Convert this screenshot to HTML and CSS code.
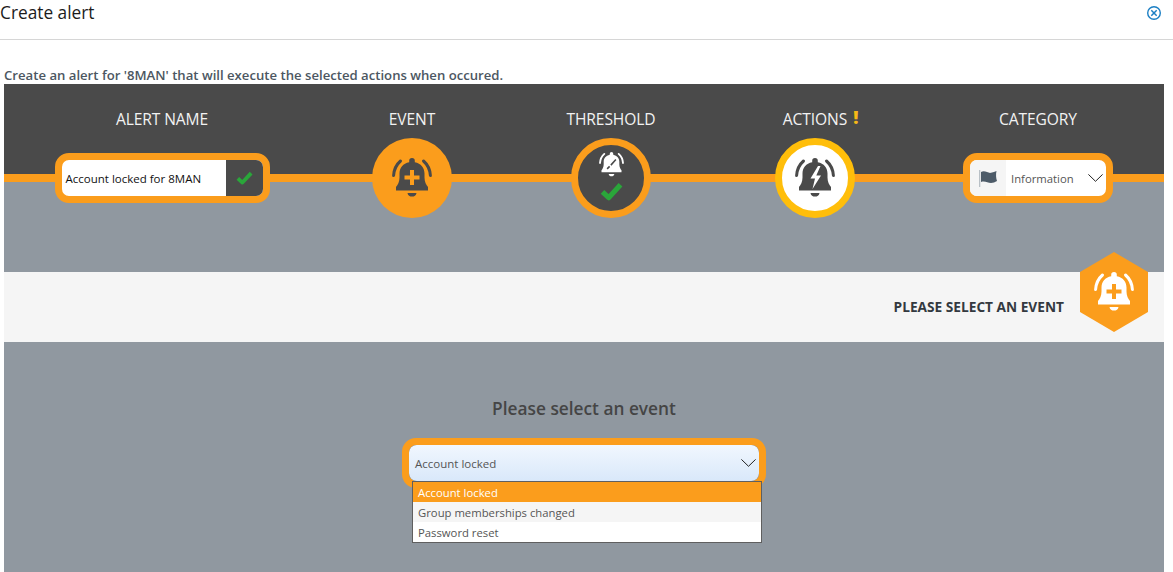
FILE: index.html
```html
<!DOCTYPE html>
<html lang="en">
<head>
    <meta charset="UTF-8">
    <meta name="viewport" content="width=device-width, initial-scale=1.0">
    <title>Create alert</title>
    <link rel="stylesheet" href="styles.css">
</head>
<body>
    <svg class="icon-defs" width="0" height="0" aria-hidden="true">
        <symbol id="bell" viewBox="0 0 40 40">
            <path fill="currentColor" d="M20 0a2.800 2.800 0 0 1 2.800 2.800v1.500C29 5.500 32.500 10 32.500 15.500v4c0 4.500 1.800 7.500 3.500 9.500v3.500H4V29c1.700-2 3.500-5 3.500-9.500v-4C7.500 10 11 5.500 17.200 4.300V2.800A2.800 2.800 0 0 1 20 0z"/>
            <path fill="currentColor" d="M15.500 35h9c-.4 2.600-2.200 3.600-4.500 3.600s-4.100-1-4.500-3.600z"/>
            <path fill="none" stroke="currentColor" stroke-width="3" stroke-linecap="round" d="M1.600 17.500C2 11.500 4.500 6.500 8.500 3M38.400 17.500C38 11.500 35.500 6.500 31.500 3"/>
        </symbol>
        <symbol id="check" viewBox="0 0 24 20">
            <path fill="none" stroke="currentColor" stroke-width="5.400" stroke-linejoin="round" d="M2.500 10.500l6.500 6L21.500 3"/>
        </symbol>
        <symbol id="chevron" viewBox="0 0 15 8">
            <path fill="none" stroke="currentColor" stroke-width="1" d="M.4 .4L7.500 7.300 14.600 .4"/>
        </symbol>
    </svg>

    <div class="dialog-header">
        <h1>Create alert</h1>
        <svg class="close-icon" viewBox="0 0 16 16" width="16" height="16">
            <circle cx="8" cy="8" r="6.300" fill="none" stroke="#1b7fc4" stroke-width="1.400"/>
            <path fill="none" stroke="#1b7fc4" stroke-width="1.500" d="M5.300 5.300l5.400 5.400M10.700 5.300l-5.400 5.400"/>
        </svg>
    </div>

    <p class="intro">Create an alert for '8MAN' that will execute the selected actions when occured.</p>

    <div class="wizard">
        <div class="steps">
            <div class="step">
                <div class="step-label">ALERT NAME</div>
                <div class="field-frame name-field">
                    <span class="name-text">Account locked for 8MAN</span>
                    <span class="name-check">
                        <svg class="check-icon" width="17" height="14"><use href="#check"/></svg>
                    </span>
                </div>
            </div>
            <div class="step">
                <div class="step-label">EVENT</div>
                <div class="step-circle circle-event">
                    <svg class="bell-icon" width="40" height="40" viewBox="0 0 40 40">
                        <use href="#bell"/>
                        <path class="bell-plus" d="M20 12v15M12.500 19.500h15"/>
                    </svg>
                </div>
            </div>
            <div class="step">
                <div class="step-label">THRESHOLD</div>
                <div class="step-circle circle-threshold">
                    <svg class="threshold-bell" width="25" height="25" viewBox="0 0 40 40">
                        <use href="#bell"/>
                        <path class="bell-slash" d="M13 27l4-4M19 21l8-9"/>
                    </svg>
                    <svg class="check-icon" width="23" height="19"><use href="#check"/></svg>
                </div>
            </div>
            <div class="step">
                <div class="step-label">ACTIONS<span class="warn-mark">!</span></div>
                <div class="step-circle circle-actions">
                    <svg class="bell-icon" width="40" height="40" viewBox="0 0 40 40">
                        <use href="#bell"/>
                        <path class="bell-bolt" d="M23 8l-7.500 12.500h4.500L17.500 31l8.500-13.500h-4.700L25.500 8z"/>
                    </svg>
                </div>
            </div>
            <div class="step">
                <div class="step-label">CATEGORY</div>
                <div class="field-frame category-field">
                    <span class="category-flag">
                        <svg width="20" height="17" viewBox="0 0 20 17">
                            <path fill="#b9c0c6" d="M1 0h1.300v17H1z"/>
                            <path fill="#4d5b68" d="M3 2c4-2 7 1.500 10 .8 2-.4 4-1 5.500-1.800-.8 3.500-.5 7 .5 10-2 1.200-4 2-6 2-3.500 0-6-2.500-10-1z"/>
                        </svg>
                    </span>
                    <span class="category-text">Information</span>
                    <svg class="chevron" width="15" height="8"><use href="#chevron"/></svg>
                </div>
            </div>
        </div>

        <div class="event-band">
            <span class="band-title">PLEASE SELECT AN EVENT</span>
            <div class="band-hex">
                <svg width="40" height="40" viewBox="0 0 40 40">
                    <use href="#bell"/>
                    <path class="bell-plus" d="M20 12v15M12.500 19.500h15"/>
                </svg>
            </div>
        </div>

        <div class="event-body">
            <h2>Please select an event</h2>
            <div class="select-wrap">
                <div class="field-frame select-frame">
                    <div class="select-box">
                        <span>Account locked</span>
                        <svg class="chevron" width="15" height="8"><use href="#chevron"/></svg>
                    </div>
                </div>
                <ul class="select-list">
                    <li class="selected">Account locked</li>
                    <li class="hover">Group memberships changed</li>
                    <li>Password reset</li>
                </ul>
            </div>
        </div>
    </div>
</body>
</html>
```

FILE: styles.css
```css
html, body {
    height: 100%;
}
body {
    margin: 0;
    overflow: hidden;
    background-color: #fff;
    font-family: 'Open Sans', 'Liberation Sans', sans-serif;
    color: #333;
}
.icon-defs {
    position: absolute;
}
.dialog-header {
    height: 39px;
    border-bottom: 1px solid #d6d6d6;
    display: flex;
    justify-content: space-between;
    padding-right: 11px;
}
.dialog-header h1 {
    margin: 0;
    font-size: 17.300px;
    line-height: 25px;
    font-weight: 400;
    color: #1c1c1c;
}
.close-icon {
    margin-top: 5px;
}
.intro {
    margin: 0;
    padding: 27px 0 0 4px;
    height: 17px;
    font-size: 13.150px;
    line-height: 17px;
    font-weight: 600;
    color: #4c5762;
}

.wizard {
    margin: 0 9px 0 4px;
}
.steps {
    height: 188px;
    display: grid;
    grid-template-columns: 316px 184px 214px 194px 252px;
    background: linear-gradient(#4a4a4a 0, #4a4a4a 90px, #fb9d1c 90px, #fb9d1c 98px, #9098a0 98px);
}
.step {
    display: flex;
    flex-direction: column;
    align-items: center;
}
.step-label {
    position: relative;
    height: 54px;
    line-height: 70px;
    font-size: 15.600px;
    letter-spacing: -0.1px;
    color: #f2f2f2;
    white-space: nowrap;
}
.warn-mark {
    position: absolute;
    left: 100%;
    margin-left: 6px;
    top: -2px;
    font-size: 18px;
    font-weight: 800;
    color: #f7b917;
}

.field-frame {
    box-sizing: border-box;
    display: flex;
    align-items: center;
    height: 50px;
    margin-top: 15px;
    border: 7px solid #fb9d1c;
    border-radius: 14px;
    background-color: #fff;
    overflow: hidden;
}
.name-field {
    width: 215px;
}
.name-text {
    flex: 1;
    padding-left: 4px;
    font-size: 11.500px;
    color: #111;
    white-space: nowrap;
}
.name-check {
    width: 37px;
    height: 100%;
    display: flex;
    align-items: center;
    justify-content: center;
    background-color: #4a4a4a;
}
.check-icon {
    color: #2aa63a;
}
.category-field {
    width: 150px;
}
.category-flag {
    width: 36px;
    height: 100%;
    display: flex;
    align-items: center;
    justify-content: center;
    background-color: #f5f5f5;
}
.category-text {
    flex: 1;
    padding-left: 5px;
    font-size: 11.300px;
    color: #555;
}
.chevron {
    color: #222;
    margin-right: 3px;
}

.step-circle {
    box-sizing: border-box;
    width: 80px;
    height: 80px;
    border-radius: 50%;
    display: flex;
    flex-direction: column;
    align-items: center;
    justify-content: center;
}
.circle-event {
    background-color: #fb9d1c;
    color: #4a4a4a;
}
.circle-threshold {
    border: 7px solid #fb9d1c;
    background-color: #4a4a4a;
    color: #fff;
    gap: 5px;
    padding-bottom: 3px;
}
.circle-actions {
    border: 7px solid #ffbe0a;
    background-color: #fff;
    color: #4a4a4a;
}
.bell-plus {
    fill: none;
    stroke: #fb9d1c;
    stroke-width: 4;
}
.bell-slash {
    fill: none;
    stroke: #4a4a4a;
    stroke-width: 2.500;
}
.bell-bolt {
    fill: #fff;
}

.event-band {
    position: relative;
    height: 70px;
    display: flex;
    align-items: center;
    justify-content: flex-end;
    padding-right: 100px;
    background-color: #f5f5f5;
}
.band-title {
    padding-bottom: 2px;
    font-size: 13.700px;
    font-weight: 700;
    color: #33393f;
}
.band-hex {
    position: absolute;
    top: -20px;
    right: 16px;
    width: 68px;
    height: 80px;
    display: flex;
    align-items: center;
    justify-content: center;
    color: #fff;
    background-color: #fb9d1c;
    clip-path: polygon(50% 0, 100% 25%, 100% 75%, 50% 100%, 0 75%, 0 25%);
}

.event-body {
    height: 230px;
    background-color: #9098a0;
    display: flex;
    flex-direction: column;
    align-items: center;
}
.event-body h2 {
    margin: 54px 0 0;
    height: 42px;
    font-size: 17.300px;
    line-height: 26px;
    font-weight: 600;
    color: #454545;
}
.select-wrap {
    position: relative;
}
.select-frame {
    width: 364px;
    height: 50px;
    margin-top: 0;
    background-color: transparent;
}
.select-box {
    flex: 1;
    height: 100%;
    display: flex;
    align-items: center;
    justify-content: space-between;
    padding-left: 6px;
    border-radius: 8px;
    background: linear-gradient(#f1f7fe, #d9e8fa);
    font-size: 11.500px;
    color: #555;
}
.select-list {
    position: absolute;
    top: 43px;
    left: 10px;
    width: 348px;
    margin: 0;
    padding: 0;
    list-style: none;
    border: 1px solid #5f5f5f;
    background-color: #fff;
    font-size: 11.300px;
    line-height: 22px;
    color: #555;
}
.select-list li {
    height: 20px;
    padding-left: 5px;
}
.select-list .selected {
    background-color: #fb9d1c;
    color: #fff;
}
.select-list .hover {
    background-color: #f5f5f5;
}
```
